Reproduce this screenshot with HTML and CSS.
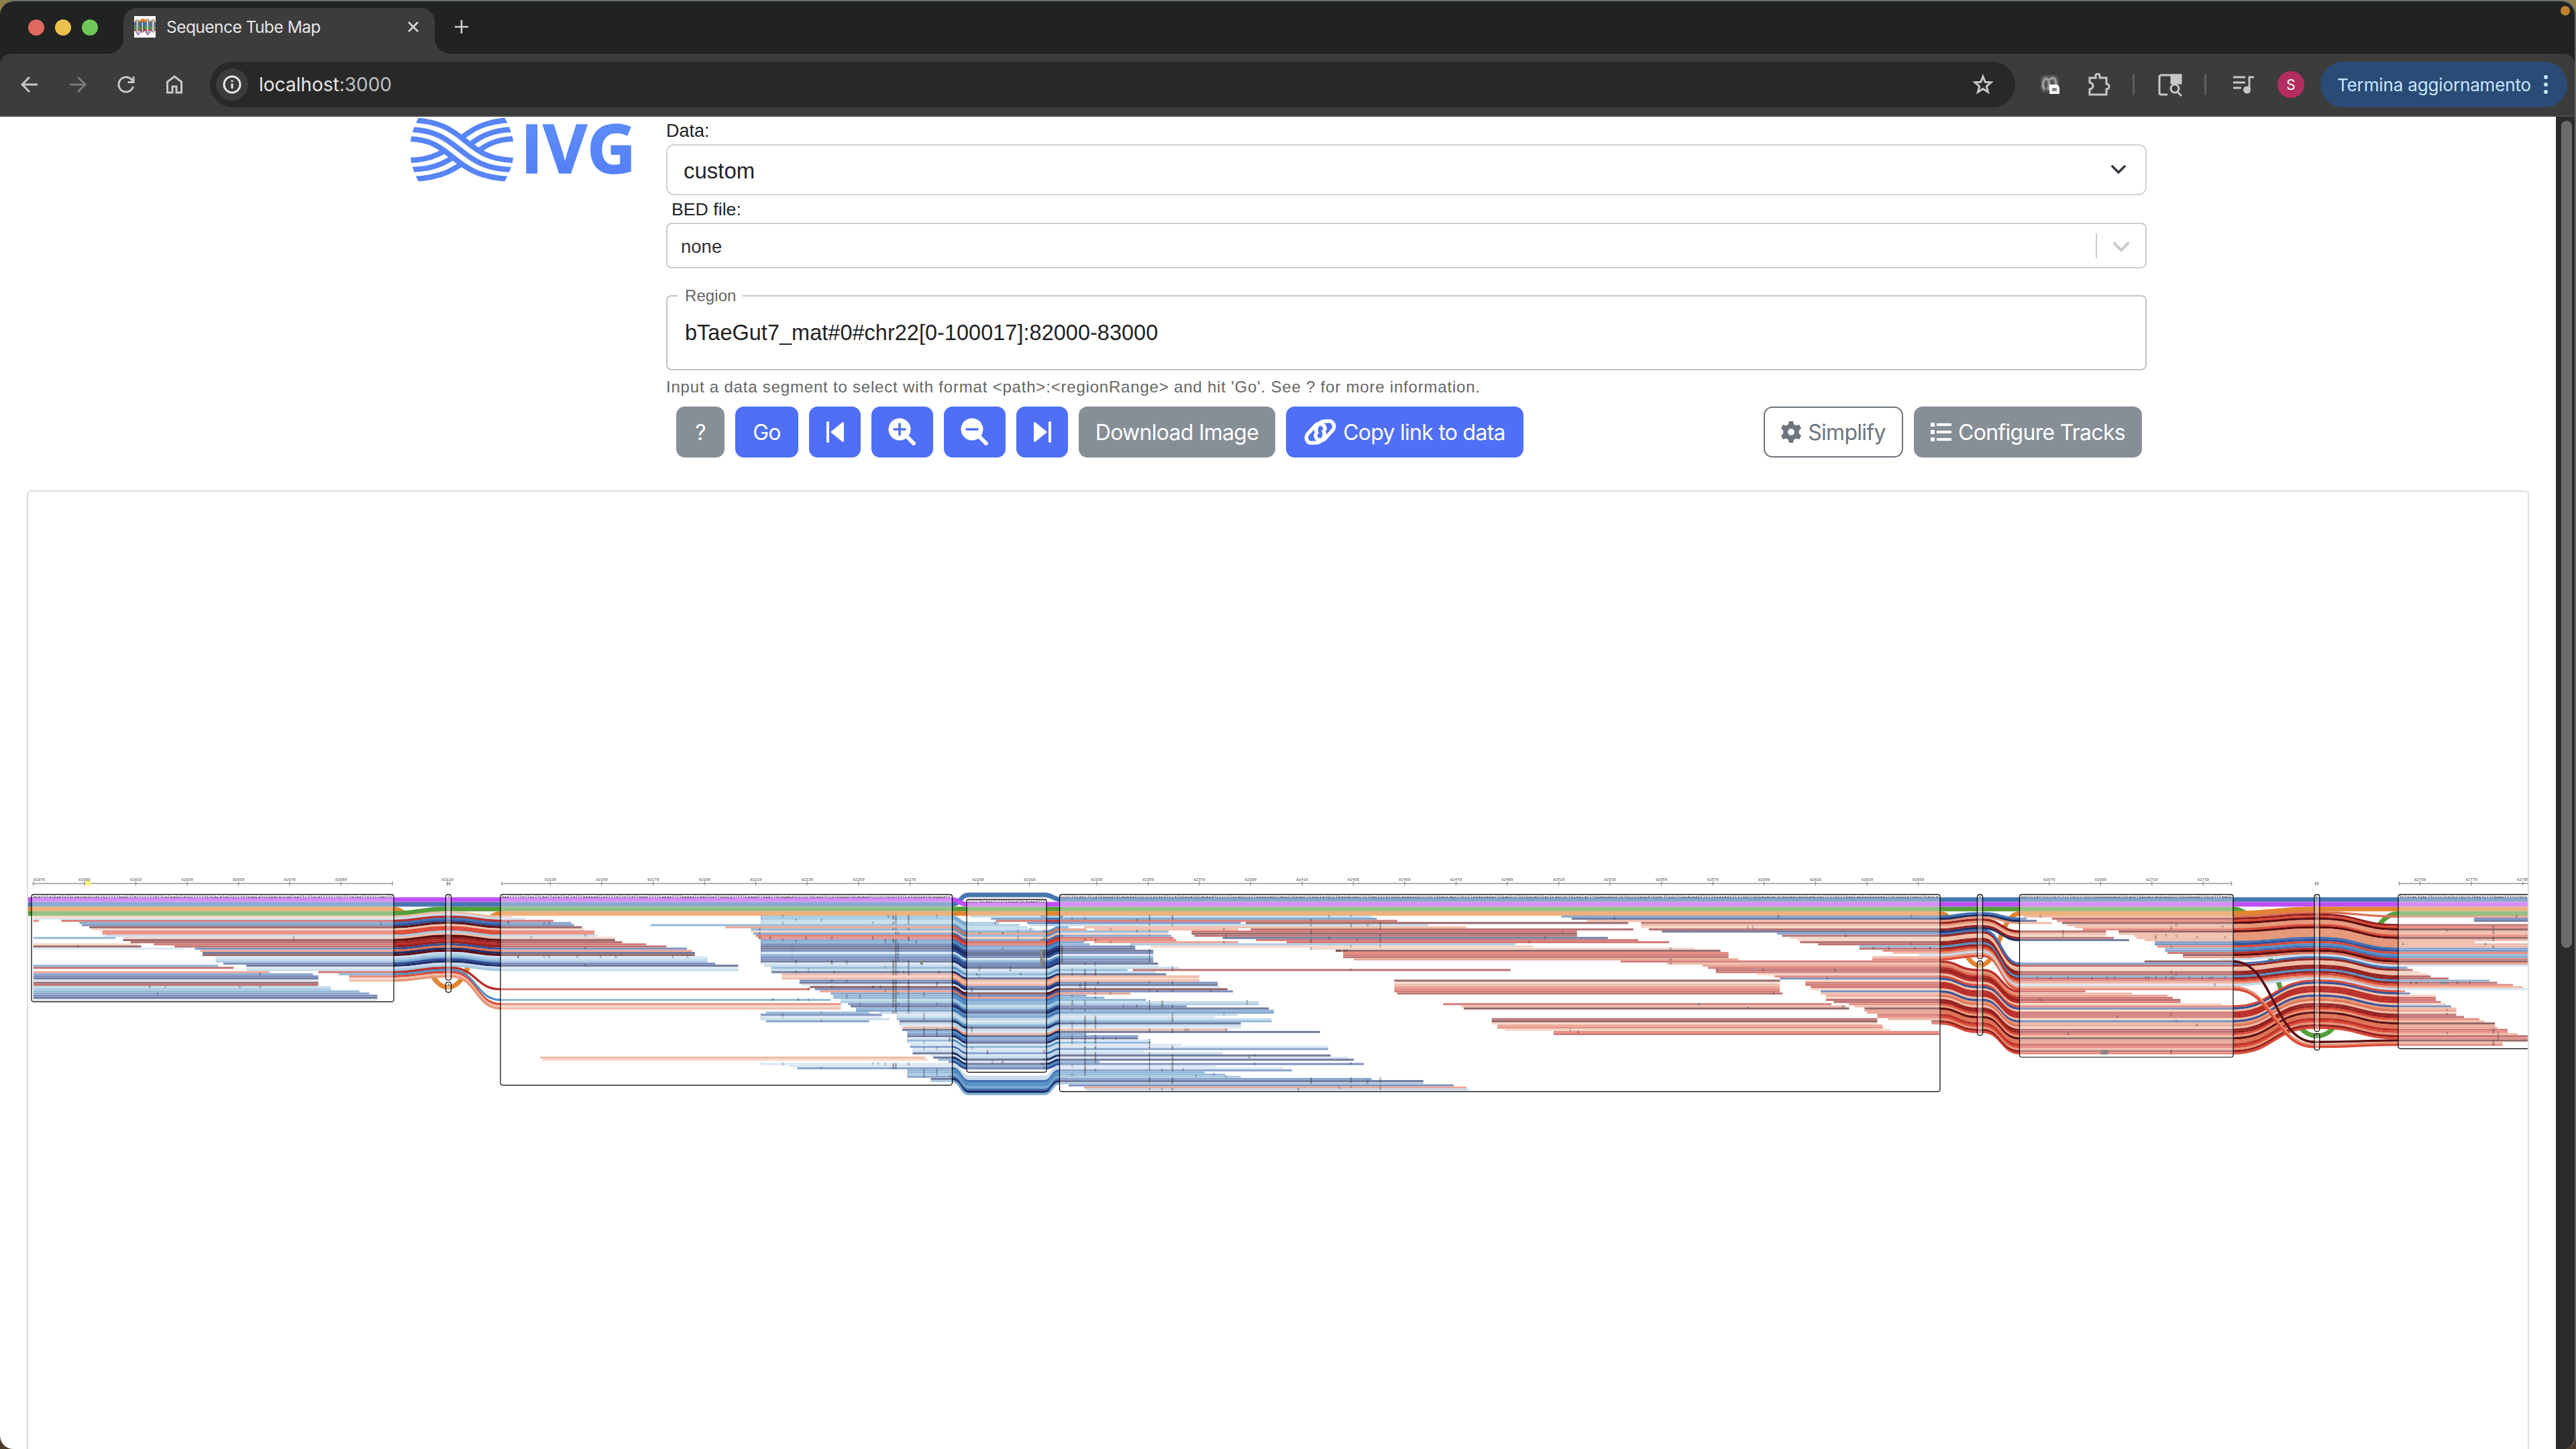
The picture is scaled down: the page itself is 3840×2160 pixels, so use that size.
FILE: index.html
```html
<!DOCTYPE html>
<html lang="it">
<head>
<meta charset="utf-8">
<title>Sequence Tube Map</title>
<link rel="stylesheet" href="styles.css">
</head>
<body>
<div class="window">
  <div class="tabstrip">
    <div class="lights"><i class="light red"></i><i class="light yellow"></i><i class="light green"></i></div>
    <div class="tab">
      <svg class="favicon" viewBox="0 0 32 32"><rect width="32" height="32" fill="#fff"/><path d="M1 8h30" stroke="#d9813a" stroke-width="3"/><path d="M0 12h32" stroke="#3f77b0" stroke-width="6"/><path d="M0 17.500h32" stroke="#4b9a3c" stroke-width="5"/><path d="M0 21h32" stroke="#c33" stroke-width="2"/><path d="M9 8q4-6 9 0" stroke="#e2852f" stroke-width="3" fill="none"/><path d="M2 22l4 6 4-6M16 22l4 6 5-6" stroke="#9568bd" stroke-width="1.500" fill="none"/><g fill="#ccc" stroke="#777"><rect x="3" y="5" width="3" height="20" rx="1.500"/><rect x="10.500" y="8" width="3.500" height="16" rx="1.500" stroke="#222"/><rect x="18.500" y="4" width="3" height="22" rx="1.500"/><rect x="26.500" y="5" width="3.500" height="19" rx="1.500"/></g></svg>
      <span class="tab-title">Sequence Tube Map</span>
      <svg class="tab-close" viewBox="0 0 16 16"><path d="M1 1l14 14M15 1L1 15"/></svg>
    </div>
    <svg class="new-tab" viewBox="0 0 20 20"><path d="M10 0v20M0 10h20"/></svg>
    <i class="rec-dot"></i>
  </div>
  <div class="toolbar">
    <div class="nav">
      <svg viewBox="0 0 32 32"><path d="M28 16H5M16 5L5 16l11 11"/></svg>
      <svg class="dim" viewBox="0 0 32 32"><path d="M4 16h23M16 5l11 11-11 11"/></svg>
      <svg viewBox="0 0 32 32"><path d="M26.500 19A11 11 0 1 1 24 8.500L27 12M27 4v8.500h-8.500"/></svg>
      <svg viewBox="0 0 32 32"><path d="M5.500 28V12L16 4l10.500 8v16H19v-9h-6v9z"/></svg>
    </div>
    <div class="omnibox">
      <span class="info"><svg viewBox="0 0 28 28"><circle cx="14" cy="14" r="12"/><path d="M14 12.500v7.500M14 7.500v2.500"/></svg></span>
      <span class="url">localhost<span class="port">:3000</span></span>
      <svg class="star" viewBox="0 0 32 32"><path d="M16 4l3.300 8.200 8.700.6-6.700 5.700 2.200 8.700L16 22.400l-7.500 4.800 2.200-8.700L4 12.800l8.700-.6z"/></svg>
    </div>
    <svg class="ext" viewBox="0 0 28 28"><rect width="27" height="26" rx="6" fill="#555"/><path d="M7 21Q2 19 4 10q3-8 7-3 3 4 0 15M13 7q6-6 9 1 2 6 0 8" fill="none" stroke="#999" stroke-width="4"/><path d="M13 14h9q6 0 6 6v8H13z" fill="#fff"/><rect x="17" y="19" width="7" height="5" fill="#888"/></svg>
    <svg class="puzzle" viewBox="0 0 34 34"><path d="M3 7h9V4a3 3 0 0 1 6 0v3h10v9a4 4 0 0 1 0 8v8H3v-8q5-1 5-5t-5-5z"/></svg>
    <i class="sep sep-a"></i>
    <svg class="search-page" viewBox="0 0 36 36"><path d="M14 33H5q-3 0-3-3V7q0-3 3-3h28v13"/><path d="M20 4h14v12H20z" fill="#c7c7c7"/><circle cx="25" cy="24" r="6"/><path d="M29 29l6 6"/></svg>
    <i class="sep sep-b"></i>
    <svg class="queue" viewBox="0 0 34 34"><path d="M2 6h18M2 14h18M2 22h12M33 6h-7v18"/><circle cx="22.500" cy="25" r="4" fill="#c7c7c7"/></svg>
    <span class="avatar">S</span>
    <div class="update"><span>Termina aggiornamento</span><i class="dots"></i></div>
  </div>
  <div class="viewport">
    <main class="page">
      <header class="header">
        <svg class="logo" viewBox="611 174 340 98">
          <defs>
            <linearGradient id="ink" x1="0" y1="0" x2="0" y2="1"><stop offset="0" stop-color="#5f92fb"/><stop offset="1" stop-color="#527bf6"/></linearGradient>
            <clipPath id="leaf"><path d="M624 175H752Q780 223 752 271H624Q598 223 624 175z"/></clipPath>
          </defs>
          <g clip-path="url(#leaf)" fill="none" stroke="#5784f8" stroke-width="8">
            <path d="M768 179C676 179 688 239 608 239M768 193C686 193 697 253 608 253M768 207C696 207 706 267 608 267"/>
            <path stroke="#fff" stroke-width="37" d="M608 193C690 193 679 253 768 253"/>
            <path d="M608 179C700 179 688 239 768 239M608 193C690 193 679 253 768 253M608 207C680 207 670 267 768 267"/>
          </g>
          <text class="logo-text" x="776" y="258" textLength="172" lengthAdjust="spacingAndGlyphs">IVG</text>
        </svg>
        <form class="form">
          <label class="label">Data:</label>
          <div class="select"><span>custom</span><svg viewBox="0 0 22 14"><path d="M2 2l9 9 9-9"/></svg></div>
          <label class="label bed">BED file:</label>
          <div class="combo"><span>none</span><i></i><svg viewBox="0 0 26 16"><path d="M3 3l10 10L23 3"/></svg></div>
          <fieldset class="region"><legend>Region</legend><span>bTaeGut7_mat#0#chr22[0-100017]:82000-83000</span></fieldset>
          <p class="helper">Input a data segment to select with format &lt;path&gt;:&lt;regionRange&gt; and hit 'Go'. See ? for more information.</p>
          <div class="buttons">
            <span class="btn grey b-help">?</span>
            <span class="btn b-go">Go</span>
            <span class="btn b-skip"><svg width="26" height="32" viewBox="0 0 26 32"><path d="M0 2q0-2 2-2t2 2v28q0 2-2 2t-2-2zM6 16L23 2q3-2 3 1v26q0 3-3 1z"/></svg></span>
            <span class="btn b-zoom"><svg width="42" height="42" viewBox="0 0 42 42"><circle cx="17" cy="17" r="16.500"/><path class="line" d="M28 28l10 10"/><path class="cut" d="M17 9v16M9 17h16"/></svg></span>
            <span class="btn b-zoom"><svg width="42" height="42" viewBox="0 0 42 42"><circle cx="17" cy="17" r="16.500"/><path class="line" d="M28 28l10 10"/><path class="cut" d="M9 17h16"/></svg></span>
            <span class="btn b-skip"><svg width="26" height="32" viewBox="0 0 26 32"><path d="M22 2q0-2 2-2t2 2v28q0 2-2 2t-2-2zM20 16L3 2Q0 0 0 3v26q0 3 3 1z"/></svg></span>
            <span class="btn grey b-down">Download Image</span>
            <span class="btn b-copy"><svg width="48" height="38" viewBox="0 0 48 38"><path class="stroke" d="M19 20C15 14 22 3 30 3h4c9-3 14 8 8 14L32 28c-5 6-16 3-15-5M29 18C33 24 26 35 18 35h-4C5 38 0 27 6 21L16 10c5-6 16-3 15 5"/></svg>Copy link to data</span>
            <span class="btn outline b-simp"><svg width="30" height="32" viewBox="0 0 30 32"><path fill-rule="evenodd" d="M12 0h6l1 4.500 3.500 2L27 5l3 5.500-3.300 3.200v4.600L30 21.500 27 27l-4.500-1.500-3.500 2L18 32h-6l-1-4.500-3.500-2L3 27l-3-5.500 3.300-3.200v-4.600L0 10.500 3 5l4.500 1.500 3.500-2zM15 11a5 5 0 1 0 0 10 5 5 0 0 0 0-10z"/></svg>Simplify</span>
            <span class="btn grey b-conf"><svg width="31" height="28" viewBox="0 0 31 28"><path d="M0 0h6v6H0zM0 11h6v6H0zM0 22h6v6H0zM9 1h22v4H9zM9 12h22v4H9zM9 23h22v4H9z"/></svg>Configure Tracks</span>
          </div>
        </form>
      </header>
      <section class="panel"><svg id="map" class="map" viewBox="42 733 3727 1427"></svg></section>
    </main>
    <div class="scrollbar"><i></i></div>
  </div>
</div>
<script src="map.js"></script>
</body>
</html>
```
FILE: styles.css
```css
* { box-sizing: border-box; }
body { margin: 0; width: 3840px; height: 2160px; overflow: hidden; background: linear-gradient(180deg, #8e7f4c, #8e7f4c 50%, #4d3b2a 51%); font-family: "Liberation Sans", Arial, sans-serif; }
svg { display: block; flex: none; }
.window { width: 3840px; height: 2160px; display: flex; flex-direction: column; background: #202321; border-top: 2px solid #6d716f; border-right: 2px solid #666; border-radius: 22px 22px 20px 20px; overflow: hidden; }
.tabstrip { height: 78px; display: flex; position: relative; font-family: Inter, sans-serif; }
.lights { display: flex; gap: 16px; padding: 27px 0 0 42px; width: 184px; }
.light { width: 24px; height: 24px; border-radius: 50%; }
.red { background: #e0695d; }
.yellow { background: #ecc04d; }
.green { background: #6fc757; }
.tab { position: relative; width: 464px; margin-top: 10px; height: 68px; background: #3c3c3c; border-radius: 20px 20px 0 0; display: flex; align-items: center; padding: 0 24px 12px 16px; }
.tab::before, .tab::after { content: ""; position: absolute; bottom: 0; width: 22px; height: 22px; }
.tab::before { left: -22px; background: radial-gradient(circle at 0 0, transparent 21.500px, #3c3c3c 22px); }
.tab::after { right: -22px; background: radial-gradient(circle at 100% 0, transparent 21.500px, #3c3c3c 22px); }
.favicon { width: 32px; height: 32px; }
.tab-title { margin-left: 16px; color: #e6e6e6; font-size: 24.500px; letter-spacing: -.55px; flex: 1; white-space: nowrap; }
.tab-close { width: 16px; height: 16px; fill: none; stroke: #d8d8d8; stroke-width: 2.600; }
.new-tab { width: 20px; height: 20px; margin: 28px 0 0 30px; fill: none; stroke: #cfcfcf; stroke-width: 2.600; }
.rec-dot { position: absolute; right: 7px; top: 7px; width: 14px; height: 14px; border-radius: 50%; background: #c28330; }
.toolbar { height: 94px; background: #3c3c3c; border-bottom: 2px solid #4a4a4a; border-radius: 16px 16px 0 0; display: flex; align-items: center; font-family: Inter, sans-serif; }
.toolbar svg { fill: none; stroke: #c7c7c7; stroke-width: 3; }
.nav { display: flex; gap: 40px; width: 313px; padding-left: 28px; }
.nav svg { width: 32px; height: 32px; }
.toolbar .nav .dim { stroke: #7b7b7b; }
.omnibox { width: 2691px; height: 68px; border-radius: 34px; background: #282828; display: flex; align-items: center; padding: 0 32px 0 9px; }
.info { width: 48px; height: 48px; border-radius: 50%; background: #3c3c3c; display: grid; place-items: center; }
.info svg { width: 28px; height: 28px; stroke: #e6e6e6; }
.url { color: #e6e6e6; font-size: 28px; margin-left: 16px; flex: 1; }
.port { color: #c0c0c0; }
.star { width: 32px; height: 32px; }
.ext { width: 28px; height: 28px; margin-left: 38px; }
.toolbar .ext { stroke: none; }
.puzzle { width: 34px; height: 34px; margin-left: 42px; }
.sep { width: 3px; height: 32px; background: #5e5e5e; border-radius: 2px; }
.sep-a { margin-left: 33px; }
.search-page { width: 36px; height: 36px; margin-left: 35px; }
.sep-b { margin-left: 33px; }
.queue { width: 34px; height: 34px; margin-left: 38px; }
.avatar { width: 40px; height: 40px; margin-left: 34px; border-radius: 50%; background: #b32d60; color: #fff; font-size: 21px; display: grid; place-items: center; }
.update { width: 368px; height: 68px; margin-left: 24px; border-radius: 34px; background: #2b4b77; color: #c8e6fb; display: flex; align-items: center; padding: 0 29px 0 25px; font-size: 26px; letter-spacing: -.15px; justify-content: space-between; white-space: nowrap; }
.dots { width: 6px; height: 6px; border-radius: 50%; background: #c8e6fb; box-shadow: 0 -11px #c8e6fb, 0 11px #c8e6fb; }
.viewport { flex: 1; display: flex; min-height: 0; }
.page { width: 3810px; background: #fff; overflow: hidden; }
.scrollbar { flex: 1; background: #2b2b2b; padding: 6px 4px 0 8px; }
.scrollbar i { display: block; height: 1233px; border-radius: 8px; background: #6b6b6b; }
.header { display: flex; padding-left: 611px; height: 508px; }
.logo { width: 340px; height: 98px; margin-right: 42px; overflow: visible; }
.logo-text { font: 700 100px "Open Sans", sans-serif; fill: url(#ink); stroke: #5784f8; stroke-width: 1.500; }
.form { width: 2207px; color: #212529; }
.label { display: block; font-size: 27px; line-height: 42px; height: 41px; }
.bed { padding-left: 8px; font-size: 26.700px; }
.select { height: 76px; border: 2px solid #ced4da; border-radius: 12px; padding: 0 29px 0 24px; display: flex; justify-content: space-between; align-items: center; font-size: 33px; }
.select span { padding-top: 3px; }
.select svg { width: 22px; height: 14px; fill: none; stroke: #343a40; stroke-width: 3.600; stroke-linecap: round; stroke-linejoin: round; }
.combo { height: 68px; border: 2px solid #ccc; border-radius: 8px; padding: 0 23px 0 20px; display: flex; align-items: center; font-size: 27.500px; color: #333; }
.combo span { flex: 1; padding-top: 3px; }
.combo i { width: 2px; height: 37px; background: #ccc; margin-right: 23px; }
.combo svg { width: 26px; height: 16px; margin-top: 3px; fill: none; stroke: #ccc; stroke-width: 4.500; stroke-linecap: round; }
.region { margin: 27px 0 0; height: 125px; border: 2px solid #c4c4c4; border-radius: 8px; padding: 0 0 0 26px; min-width: 0; font-size: 32.400px; letter-spacing: .07px; color: #222; }
.region legend { margin-left: -11px; padding: 0 10px 0 11px; font-size: 24px; line-height: 28px; color: #666; }
.region span { display: block; margin-top: 21px; line-height: 40px; }
.helper { margin: 0; height: 54px; line-height: 49px; font-size: 24px; letter-spacing: .8px; color: #666; white-space: nowrap; }
.buttons { display: flex; padding: 0 7px 0 15px; gap: 16px; font-family: Inter, sans-serif; font-size: 32px; }
.btn { height: 76px; border-radius: 13px; background: #4f6ff6; color: #fff; display: flex; align-items: center; justify-content: center; white-space: nowrap; letter-spacing: -.72px; }
.btn svg { fill: currentColor; }
.btn .line { stroke: #fff; stroke-width: 6; stroke-linecap: round; }
.btn .cut { stroke: #4f6ff6; stroke-width: 3.600; stroke-linecap: round; }
.btn .stroke { fill: none; stroke: #fff; stroke-width: 5.500; stroke-linecap: round; }
.grey { background: #868e96; }
.outline { background: #fff; color: #6c757d; border: 2px solid #6c757d; }
.b-help { width: 72px; }
.b-go { width: 94px; }
.b-skip { width: 77px; }
.b-zoom { width: 92px; }
.b-down { width: 293px; }
.b-copy { width: 354px; gap: 10px; }
.b-simp { width: 208px; margin-left: auto; gap: 10px; }
.b-conf { width: 340px; gap: 10px; }
.panel { margin: 49px 40px 0 40px; height: 1500px; border: 2px solid #dedede; border-radius: 6px; overflow: hidden; }
.map { width: 3727px; height: 1427px; }
.ruler { stroke: #999; stroke-width: 1.500; }
.ruler-label { font: 5.800px "Liberation Mono", monospace; fill: #444; }
.bases { font: 5.600px "Liberation Mono", monospace; fill: #222; }
.variant { font: 5px "Liberation Mono", monospace; fill: #222; fill-opacity: .8; text-anchor: middle; }
.node { fill: #fff; fill-opacity: .37; stroke: #000; stroke-width: 1.200; }
.tube { fill: none; stroke-width: 3.400; }
.haplotype { fill: none; stroke-width: 7; }
```
FILE: map.js
```js
const PALETTE = {
  a: '#efbda6', b: '#e69678', c: '#de7255', d: '#dc4a38', e: '#b92e28', f: '#942220', g: '#5a0d12',
  A: '#c8daee', B: '#a5c9e1', C: '#7badd3', D: '#5590c3', E: '#4471b1', F: '#32519a', G: '#1f2f67'
};
const PURPLE = '#bf4ffa', BLUE = '#4876b0', ORANGE = '#e28532', GREEN = '#549e3b';
const out = [];
const rowY = r => 1366.33 + 3.185 * r;
const third = y => 1290 + y / 3;

// Horizontal scales of the map sections: origin and pixels per unit.
const S1 = x => x * 0.4974;
const S2 = x => 740 + x * 0.4592;
const S3 = x => 1400 + x * 0.4464;
const S4 = x => 2040 + x * 0.5485;
const S5 = x => 2860 + x / 3;
const S6 = x => 3300 + x * 0.3444;

function bar(scale, row, x0, x1, c) {
  const a = scale(x0), b = scale(x1);
  out.push(`<rect x="${a.toFixed(1)}" y="${(rowY(row) - 1.5).toFixed(2)}" width="${(b - a).toFixed(1)}" height="3" fill="${PALETTE[c]}"/>`);
}
function bars(scale, text) {
  text.trim().split(/\s*,\s*/).forEach(t => {
    const [r, a, b, c] = t.split(' ');
    bar(scale, +r, +a, +b, c);
  });
}
// points: pairs of x, y; flat segments join points of equal height
function curve(points, color, cls) {
  let d = `M${points[0][0]} ${points[0][1]}`;
  for (let i = 1; i < points.length; i++) {
    const [x0, y0] = points[i - 1], [x1, y1] = points[i], m = (x0 + x1) / 2;
    d += y0 === y1 ? `H${x1}` : `C${m} ${y0} ${m} ${y1} ${x1} ${y1}`;
  }
  out.push(`<path class="${cls}" d="${d}" stroke="${color}"/>`);
}
const tube = (pts, c) => curve(pts.map(p => [p[0], rowY(p[1])]), PALETTE[c], 'tube');
const hap = (pts, color) => curve(pts.map(p => [p[0], third(p[1])]), color, 'haplotype');

// Haplotypes
hap([[587, 195], [668, 545], [746, 215]], ORANGE);
hap([[2892, 215], [2951, 448], [3010.5, 215]], ORANGE);
hap([[3329, 195], [3454, 763], [3575, 215]], GREEN);
hap([[41, 195], [587, 195]], ORANGE);
hap([[41, 215], [587, 215], [664, 195], [3329, 195]], GREEN);
hap([[746, 215], [2892, 215]], ORANGE);
hap([[3010.5, 215], [3329, 215], [3450, 195], [3770, 195]], ORANGE);
hap([[3575, 215], [3770, 215]], GREEN);
hap([[41, 174], [1419.5, 174], [1444, 132], [1557, 132], [1582, 153], [3770, 153]], BLUE);
hap([[41, 153], [1419.5, 153], [1441, 174], [3770, 174]], PURPLE);

// First node and the reads leaving it
bars(S1, `2 100 116 d,10 100 346 D,13 100 415 a,14 100 423 g,15 100 554 A,23 100 654 D,24 100 700 f,26 100 807 c,27 100 938 E,
28 100 954 F,29 100 954 G,30 100 954 A,31 100 954 g,32 100 954 f,33 100 992 B,34 100 992 C,35 100 1077 D,36 100 1107 E,37 100 1131 F,38 100 1131 G,39 100 1131 A`);
const c1 = 'aAeEFgaddBagfefFcGgABCFGABeDdab';
[100, 100, 184, 238, 246, 268, 276, 307, 307, 315, 369, 369, 392, 461, 523, 584, 600, 607, 607, 646, 646, 646, 669, 738, 738, 738, 954, 1015, 1046, 1046, 1046]
  .forEach((x, r) => bar(S1, r, x, 1180, c1[r]));
const jump = { 26: 34, 27: 39, 28: 41, 29: 42, 30: 43 };
[...c1].forEach((c, r) => tube([[587, r], [664, r - 2], [673, r - 2], [746, jump[r] || r]], c));

// Third node
[51, 93, 185, 243, 252, 277, 285, 318, 318, 327, 385, 385, 409, 486, 552, 618, 635, 644, 644, 685, 685, 685, 710, 785, 785, 785]
  .forEach((x, r) => bar(S2, r, 13, x, c1[r]));
bars(S2, `34 13 1018 e,39 13 1085 D,41 13 1118 d,42 13 1118 a,43 13 1118 b,45 875 1210 D,46 858 1251 F,47 858 1251 A,48 858 1276 B,49 875 1210 E,66 142 1393 b,67 150 1401 a`);
const c3 = 'CCBBDcDaEe' + 'dEDFGGFADF' + 'FGABDBGbab' + 'FGAgFcEDDB' + 'CFGDEBABDG' + 'BAbGDEGADA' + 'AEABGAGDFA' + 'AEDDCEGC';
const start3 = [858, 858, 858, 858, 500, 743, 826, 826, 834, 842, 850, 858, 858, 858, 858, 858, 858, 858, 858, 858, 858, 858, 858, 868, 893, 893, 893, 926, 926, 926,
  984, 984, 992, 1018, 1034, 1051, 1085, 1093, 1093, 1117, 1117, 1142, 1150, 1167, 1167, 1243, 1300, 1300, 1300, 1309, 1309, 1309, 1318, 1318,
  1334, 1334, 1334, 1334, 1334, 1334, 1343, 1343, 1351, 1351, 1351, 1410, 1418, 1434, 1468, 858, 951, 976, 1334, 1334, 1334, 1334, 1410, 1410];
start3.forEach((x, r) => bar(S2, r, x, 1480, c3[r]));

// Through and below the fourth node
const end4 = { 0: 200, 1: 268, 2: 294, 3: 319 };
[...c3].forEach((c, r) => {
  if (r < 4) {
    tube([[1419.5, r], [1441, r + 3]], c);
    bar(S3, r + 3, 92, end4[r], c);
  } else if (r < 69) {
    tube([[1419.5, r], [1441, r + 3], [1560, r + 3], [1579.5, r + 1]], c);
  } else {
    tube([[1419.5, r], [1444, r + 6], [1557, r + 6], [1579.5, r + 1]], c);
  }
});
[[105, 'B'], [173, 'E'], [190, 'e'], [294, 'F'], [302, 'B']].forEach(([x, c], r) => bar(S3, r, x, 402, c));

// Fifth node
const c5l = 'BEeFB' + c3.slice(4);
[1444, 1461, 1530, 1007, 1633, 432, 492, 766, 766, 775, 783, 792, 484, 502, 655, 655, 715, 715, 715, 715, 715, 715, 731, 731, 801, 629, 723, 758, 869, 869,
  869, 930, 930, 938, 963, 981, 638, 492, 552, 690, 1067, 1067, 827, 1101, 1118, 1118, 998, 921, 1110, 1110, 1007, 1007, 1007, 963, 1272, 492, 664, 664, 706, 706,
  810, 1299, 1299, 681, 947, 1307, 1367, 1384, 535, 1418, 921, 1153, 1178, 887, 955, 1007, 1444, 1617, 1617].forEach((x, r) => bar(S3, r, 402, x, c5l[r]));
bars(S3, `3 1024 2301 g,5 484 1760 b,6 518 998 b,6 1040 2318 f,7 843 2130 e,8 843 2130 g,9 852 2130 f,10 947 2233 G,11 1058 2335 e,12 518 998 c,12 1160 2438 e,
13 638 1924 C,14 706 1984 a,15 1240 2524 a,16 1324 2609 g,17 1349 2636 d,18 1349 2636 e,19 1349 2636 f,20 1384 2669 c,25 647 1908 f,79 432 1718 F,80 484 1760 c,81 492 1769 B`);
bars(S4, `30 70 1118 g,31 70 1118 a,32 70 1118 b,33 70 1118 c,34 70 1118 d,35 70 1118 e,36 78 1125 f,41 203 1258 e,42 252 1299 b,43 259 1306 g,
48 335 1383 f,49 335 1383 g,50 335 1383 a,51 350 1397 c,52 350 1397 d,53 371 1418 a,54 503 1551 d,55 503 1551 e`);
const c5 = 'EGbfbafGEf' + 'aaffDfdbAb' + 'debcefeadF' + 'aeeeaFbcaf' + 'fdbgccedbfd';
[524, 552, 594, 741, 741, 741, 762, 797, 1110, 1124, 1146, 1167, 1173, 1222, 1334, 1334, 1397, 1425, 1495, 1369, 1369, 685, 811, 908, 923, 944, 944, 1055, 1104, 1118,
  1187, 1187, 1187, 1202, 1202, 1229, 1229, 1243, 1243, 1243, 1264, 1306, 1320, 1348, 1348, 1355, 1383, 1383, 1411, 1530, 1530].forEach((x, r) => bar(S4, r, x, 1553, c5[r]));

// Sixth node: upper and lower branch
const row7 = r => r < 3 ? r + 1 : r < 8 ? r + 4 : r + 14;
[...c5].map((c, r) => [c, r]).reverse().forEach(([c, r]) => {
  const mid = r < 21 ? r - 1.6 : r + 4;
  tube([[2892, r], [2947, mid], [2956, mid], [3010.5, row7(r)]], c);
});

// Seventh node
bars(S5, `0 470 1405 b,1 452 482 E,1 597 1405 f,2 452 528 G,2 618 1405 d,3 452 597 b,3 642 1405 g,4 665 1405 b,5 699 1405 b,6 734 1405 d,7 452 838 f,7 895 1405 g,
8 452 838 b,8 895 1405 b,9 452 838 a,9 964 1405 b,10 452 873 f,10 975 1405 b,11 452 941 G,11 1010 1405 b,12 1056 1405 E,13 1056 1405 F,14 1067 1405 d,15 1102 1405 D,
16 1102 1405 E,17 1113 1405 e,18 1182 1405 g,19 1182 1405 c,20 1342 1405 A,21 1010 1405 g,35 452 746 e,36 452 953 b,37 452 1113 c,38 452 1136 e,39 452 1171 f,40 452 1171 e,41 452 1355 a`);
const c7 = 'cfdgbbdgbbbbEFdDEegcAg' + c5.slice(8, 21) + '.......' + c5.slice(28);
[...c7].forEach((c, r) => { if (r >= 22 && c !== '.') bar(S5, r, 452, 1405, c); });

// Eighth node and on into the ninth
[...c7].map((c, r) => [c, r]).filter(p => p[0] !== '.').forEach(([c, r]) => {
  let mid, end;
  if (r === 0) { mid = -2; end = 0; }
  else if (r === 21) { mid = 58.7; end = 58; }
  else if (r < 21) { mid = r - 2; end = r + 3; }
  else if (r < 33) { mid = r - 3; end = r + 2; }
  else if (r < 35) { mid = r + 27; end = r + 26; }
  else { mid = r - 12; end = r - 7; }
  tube([[3329, r], [3450, mid], [3458, mid], [3575, end]], c);
});
tube([[3329, 21], [3450, 58.7]], 'g');
tube([[3329, 33], [3450, 60]], 'b');
tube([[3329, 34], [3450, 61]], 'd');
const c9 = 'c...' + c7.slice(1, 21) + c7.slice(22, 33) + c7.slice(42) + 'gbd';
const end9 = { 12: 1130, 24: 838, 25: 861, 26: 893, 27: 927, 28: 939, 29: 1016, 30: 1193, 31: 1227, 32: 1295, 33: 1339, 35: 828, 36: 850, 37: 961, 38: 961, 39: 961,
  40: 983, 41: 1005, 42: 1027, 43: 1050, 44: 1050, 45: 1050, 46: 1050, 47: 1083, 48: 1150, 49: 1172, 50: 1217, 51: 1217, 52: 1227, 53: 1272, 54: 1272, 55: 1316, 59: 1250, 60: 1250 };
[...c9].forEach((c, r) => { if (c !== '.') bar(S6, r, 798, end9[r] || 1364, c); });
bars(S6, '1 1127 1364 F,2 1127 1364 G');

// Node outlines
[[47, 587, 130, 610], [664.5, 672.5, 130, 513], [664.5, 672.5, 522, 568], [746, 1419.5, 130, 983], [1441, 1560, 152, 925], [1579.5, 2892, 130, 1012],
  [2947.5, 2955.5, 130, 417], [2947.5, 2955.5, 427, 760], [3010.5, 3329, 130, 858], [3450, 3457.8, 130, 743], [3450, 3457.8, 752, 826], [3575, 3800, 130, 820]]
  .forEach(([a, b, t, u]) => out.push(`<rect class="node" x="${a}" y="${third(t).toFixed(1)}" width="${b - a}" height="${((u - t) / 3).toFixed(1)}" rx="3.500"/>`));

// Ruler
[[49.5, 585], [666.5, 670.5], [748, 3326.5], [3451.5, 3455.5], [3576.5, 3770]].forEach(([a, b]) => {
  out.push(`<path class="ruler" d="M${a} 1317H${b}M${a} 1314v6M${b} 1314v6"/>`);
});
function ticks(scale, first, xs) {
  xs.forEach((x, i) => {
    const px = scale(x);
    out.push(`<path class="ruler" d="M${px.toFixed(1)} 1314v6"/><text class="ruler-label" text-anchor="middle" x="${px.toFixed(1)}" y="1313">${first + 20 * i}</text>`);
  });
}
out.push('<circle cx="131" cy="1316" r="4.500" fill="#f6f47a"/>');
out.push('<text class="ruler-label" x="49.500" y="1313">81979</text>');
ticks(S1, 81999, [253, 407, 561, 715, 868, 1022]);
ticks(S1, 82119, [1341]);
ticks(S2, 82139, [175, 342, 509, 676, 842, 1009, 1176, 1343]);
ticks(S3, 82299, [130, 302, 526, 698, 869, 1040, 1212, 1383]);
ticks(S4, 82459, [98, 238, 377, 517, 656, 796, 936, 1075, 1215, 1355, 1494]);
ticks(S5, 82679, [584, 814, 1043, 1273]);
ticks(S6, 82759, [893, 1115, 1338]);

// Node sequences
[[49.5, 535.5, 1339, 'AGATGTATGAATATGCAACAGGCCACTGCTTTTAAGGTTATTCCTTTGTTCATAAGGTATGCTTTTTGTGACATAGTGTCTGTGAGCATCCGGACGCCAGTAATTCTTGCATTTTCTTGTTTTATAATTGTCCTAACTC'],
  [748, 669, 1339, 'AAATTTTTATTACTTCAATTGTATTACTATTTAAAAAATCATTTTATTGTTATTAAACTTTTCAAAATTTTAAAAATCAAGTGATTGGGCGTTTTTCAAAATTGGGCTGCAGAGATCCCCCTGCAGGTCCGTGGGGATGCAGAGATCCCCCTGCGTGTCCATGGGGATGCAGAGATC'],
  [1443, 115, 1346, 'CCCCTGCAGGTCCGTGGGGATGCAGAGATCC'],
  [1581, 1308, 1339, 'CCCCTGCAGCTCCATGGGGATGCAGAGATCCCCCCGCAGGTCCATGGGGATGCAGAGATCCCCCTGCAGCCCCTGGAGGAGCCAGGCTGGAGCTCGGCGATGCCTGAGAGGAGCTGTGACCCCGCGGGCAGAGGGGCCCGCTGGAGCAGCCTGCCTGGAGGAGACTGGAGCCCTGTGGCAGTGACCCAGCGCTGCAGCACTTGGAGGGGGCTGTGCCCGGGGATGGACTCGGCTCGGAGAAGTTCCTGGAGAAGTCTCGGCTGGGAGAGACGCAGGAGCAGGGAACGACTCCTGCCTGAGCAGGAGGGAGAGCCGCGGGGATGAGCTGAGCA'],
  [3012.5, 314, 1339, 'GGCCCCATTCCCTGTCTCCTGCCCTGCCGGGGGAGGAGGTGCAGCTGGGAGCAGGGAGGCGTGGGGAAAGCTGCATTTAAGG'],
  [3577, 190, 1339, 'TCTGCACTGACTTCTCCTCATCCTGCTCTGAGTCTTTGGAGTTTTCTGCC'],
  [667, 3.5, 1339, 'T'], [667, 3.5, 1470, 'A'], [2950, 3.5, 1339, 'T'], [2950, 3.5, 1438, 'C'], [3452, 3.5, 1339, 'C'], [3452, 3.5, 1547, 'T']]
  .forEach(([x, w, y, s]) => out.push(`<text class="bases" x="${x}" y="${y}" textLength="${w}">${s}</text>`));

// Mismatches: position, letter, rows
function variants(scale, text) {
  text.trim().split(/\s*;\s*/).forEach(t => {
    const [x, ch, rows] = t.split(' ');
    rows.split(',').forEach(part => {
      const [p, q] = part.split('-').map(Number);
      for (let r = p; r <= (q || p); r++) {
        out.push(`<text class="variant" x="${scale(+x).toFixed(1)}" y="${(rowY(r) + 1.6).toFixed(1)}">${ch}</text>`);
      }
    });
  });
}
variants(S1, '1142 C 3;880 C 10;234 T 14;780 G 27,33;449 G 33;496 C 33;719 G 33;472 G 36;1524 T 3;1553 G 19');
variants(S2, `38 T 3;155 C 3,19;171 G 3,19;288 T 9,15,23;113 T 10;71 G 19;263 G 19;338 G 19;388 G 19;572 G 19;622 C 19;930 C 0,3,11,46,47,69;972 T 2,12,21,22,26;1055 C 2,45,49,71;
1288 A 0,1,3,6,11,12,21-27,30-42,45,69-71;1297 G 0-3,6,8,11-27,30-45,69-71;1305 C 8,13-20,26,36,41;1338 G 0-3,6,10,11,21-27,30-45,69;855 G 6,8,10;889 A 10;1005 G 10;1089 A 10,21,22,30,33;1222 G 10,33;1222 T 3,69;
1272 A 0;1430 C 0,41,53-56,62,72-74;1388 C 36,37,46-48,52-56,59,62,72-75;1263 C 11,12,24,35,69;1363 A 12;1138 C 21,22,30,37,38;1180 C 37,38,41;1013 C 25,34,39;897 A 39;980 A 39;1096 A 26;1322 A 26;1438 G 26;1247 G 33;
859 ' 0-3,11-22,46-48,69;960 ' 1,8,13-20;893 ' 24-26;1301 ' 46-48;1310 ' 49-51;1335 ' 54-59,72-75;1471 G 57,58;1472 T 75;1430 A 31,32;1239 T 69`);
variants(S3, `187 G 3;306 C 6;264 C 7,10;135 C 8,24,25,28,37;212 A 8,15,68;342 A 0,69;350 A 0,11,16-23,69;350 G 7,10,67,71;238 A 24,25;126 G 27;272 G 27;109 A 34,35;109 T 52-54,62;161 G 63,64;350 T 63,64;178 C 68;
410 A 9,14-21;445 C 1,25,37,44,50-52,56-59,70,74;445 A 27,40,41;487 G 1,11,22,25-27,31-34,40,41,44,47-52,54,56-59,61-65,67-74;522 G 11,25-27,34,36,38,47-52,56-59,61,62,64-68,72;522 C 22,23;
573 C 6,12,36;616 C 42;660 G 2,7;660 T 42;702 T 0-2,4,7,9,16-21,31,35,40-44,53,54,58-62,64-72,76-78,81;779 G 0,1,4,24,25,31,35,42,46-49,53,54,61,62,65-72,76-78,81;
745 A 40,41;745 C 42,72,81;951 G 6,12;951 T 46;958 C 9,53,75;822 A 53;831 G 53;908 G 35;728 G 35;1028 T 40,41;1054 C 65,69;1036 G 66;1242 G 2,4,7,8,11,12,15,76-78;1302 G 0,10;1375 T 0,4,5,14,25,69,76-78,80;
1473 T 3-6,9,11,12,14,76-78,80,81;1431 G 4,77,78;1396 C 11;1329 A 16;1337 G 16;1353 A 16;1362 G 16;1336 C 80;1200 G 81;548 A 57;590 C 57;642 C 14;530 A 31;471 G 32,33;857 T 75;917 T 74;814 T 72`);
variants(S4, '668 G 1;1114 A 0;1476 C 0,13;1031 C 5;1045 C 5;528 C 8;479 C 10;437 G 12;821 A 15,20,22;1296 G 9;1372 T 15;1414 G 15;1484 T 15;1526 T 15;947 C 25;1072 G 25;1268 A 25;1247 A 29;1101 C 36;1031 T 43;1289 A 42;549 C 53;570 G 54');
variants(S5, '544 G 0,39;647 C 7-9;1130 C 5,6,14,26,46,63,64;1153 C 4,9,27,49;1360 T 5;1061 C 9,10;1107 T 9;1245 T 10;1371 T 10;532 T 29;590 A 29;670 T 29;775 G 29;844 T 29;878 T 29;1016 T 29;1028 T 29;1061 T 29;1107 T 29;1130 C 29;1141 G 29;1210 T 29;1268 G 29;1302 A 29;1314 T 29;1371 T 29;1325 G 32;889 T 47;1245 G 51;670 G 55;274 G 13;52 T 15');
variants(S6, '1310 G 0;1210 G 5,7,8,10,11,14,53,54,59,60;1010 T 7,44,46,55;820 G 13;1176 A 13;854 A 31;876 G 31;1055 G 31;1109 T 31;1232 C 55-57;446 T 44');
[[S2, 1376, 1384, 21, 2], [S3, 337, 346, 16, 8], [S3, 337, 346, 11, 1], [S3, 406, 413, 0, 1], [S5, 814, 848, 63, 2], [S6, 981, 1015, 31, 1], [S4, 881, 887, 7, 1], [S4, 894, 902, 41, 1]]
  .forEach(([s, a, b, r, n]) => out.push(`<rect x="${s(a)}" y="${rowY(r) - 1.6}" width="${s(b) - s(a)}" height="${3.185 * n}" fill="#858585"/>`));

document.getElementById('map').innerHTML = out.join('');
```
